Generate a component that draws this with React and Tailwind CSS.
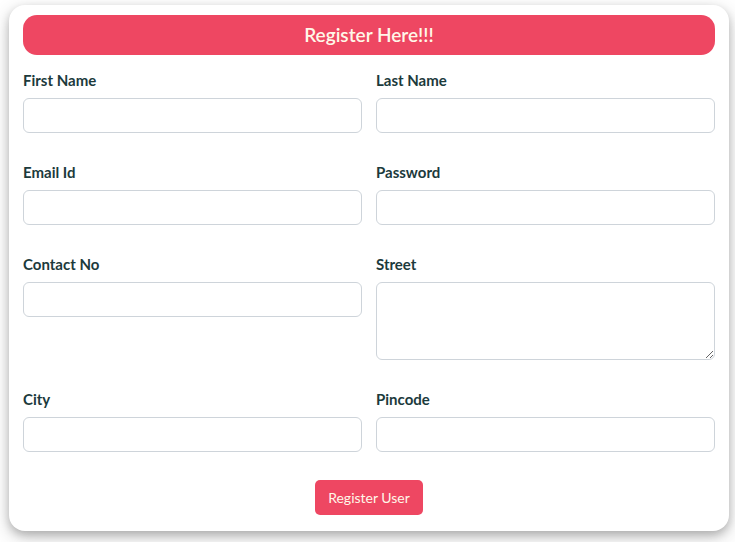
const fields = [
  { left: 'First Name', right: 'Last Name' },
  { left: 'Email Id', right: 'Password' },
  { left: 'Contact No', right: 'Street', textarea: true },
  { left: 'City', right: 'Pincode' },
];

function Field({ label, textarea }) {
  return (
    <div className="flex flex-col">
      <label className="h-5 leading-[19px] text-[15px] font-bold text-[#1c3a3c]">{label}</label>
      {textarea ? (
        <textarea className="mt-[7px] h-[78px] w-full rounded-md border border-[#ced4da] bg-white" />
      ) : (
        <input className="mt-[7px] h-[35px] w-full rounded-md border border-[#ced4da] bg-white" />
      )}
    </div>
  );
}

export default function App() {
  return (
    <div className="min-h-[542px] w-[735px] bg-white pl-[9px] pr-[6px] pt-[5px] font-['Lato',sans-serif]">
      <div className="w-[720px] rounded-2xl bg-white px-[14px] pb-4 pt-[10px] shadow-[0_4px_8px_0_rgba(0,0,0,0.2),0_6px_20px_0_rgba(0,0,0,0.19)]">
        <div className="flex h-10 items-center justify-center rounded-[14px] bg-[#ee4762]">
          <h2 className="text-[19px] font-semibold text-[#fff7e8]">Register Here!!!</h2>
        </div>
        <div className="mt-4 grid grid-cols-2 gap-x-[14px] gap-y-[30px]">
          {fields.map((row) => (
            <div key={row.left} className="contents">
              <Field label={row.left} />
              <Field label={row.right} textarea={row.textarea} />
            </div>
          ))}
        </div>
        <div className="mt-[28px] flex justify-center">
          <button className="h-[35px] w-[108px] rounded-[5px] bg-[#ee4762] text-[14px] text-[#fff7e8]">
            Register User
          </button>
        </div>
      </div>
    </div>
  );
}
